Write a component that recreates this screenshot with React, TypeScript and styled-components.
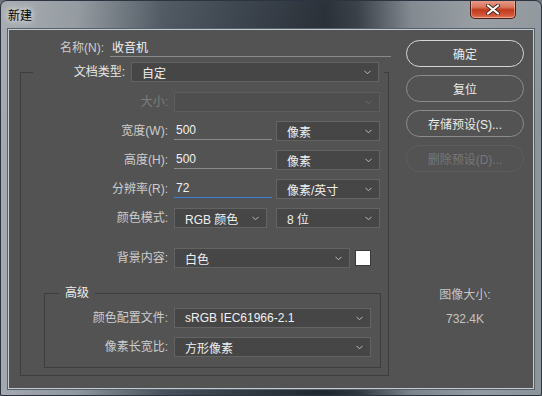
import React from 'react'
import styled, { createGlobalStyle, css } from 'styled-components'

const GlobalStyle = createGlobalStyle`
  html, body {
    margin: 0;
    padding: 0;
    background: #6d747b;
  }
  body {
    font-family: "Liberation Sans", "Noto Sans CJK SC", sans-serif;
    font-size: 12px;
  }
`

const Chevron = ({ disabled }: { disabled?: boolean }) => (
  <svg width="7" height="5" viewBox="0 0 7 5">
    <path d="M0.5 0.8 L3.5 3.8 L6.5 0.8" fill="none" stroke={disabled ? '#6b6b6b' : '#bdbdbd'} strokeWidth="1" />
  </svg>
)

interface SelectProps {
  width: number
  disabled?: boolean
  children?: React.ReactNode
}

const Select = ({ width, disabled, children }: SelectProps) => (
  <SelectBox $width={width} $disabled={disabled}>
    <span>{children}</span>
    <Chevron disabled={disabled} />
  </SelectBox>
)

const App = () => {
  return (
    <>
      <GlobalStyle />
      <Window>
        <TitleBar>
          <Title>新建</Title>
          <CloseButton>
            <svg width="14" height="11" viewBox="0 0 14 11">
              <path d="M2 1.5 L12 9.5 M12 1.5 L2 9.5" stroke="#4a2a22" strokeWidth="4" strokeLinecap="round" />
              <path d="M2 1.5 L12 9.5 M12 1.5 L2 9.5" stroke="#ffffff" strokeWidth="2.2" strokeLinecap="round" />
            </svg>
          </CloseButton>
        </TitleBar>

        <Client>
          <FormColumn>
            <NameRow>
              <Label $width={95}>名称(N):</Label>
              <NameField>收音机</NameField>
            </NameRow>

            <Group>
              <DocLegend>
                <Label $width={92} $bright>文档类型:</Label>
                <Select width={248}>自定</Select>
              </DocLegend>

              <Row $top={10}>
                <Label $width={147} $disabled>大小:</Label>
                <Select width={206} disabled />
              </Row>
              <Row $top={9}>
                <Label $width={147}>宽度(W):</Label>
                <Field>500</Field>
                <Select width={104}>像素</Select>
              </Row>
              <Row $top={9}>
                <Label $width={147}>高度(H):</Label>
                <Field>500</Field>
                <Select width={104}>像素</Select>
              </Row>
              <Row $top={9}>
                <Label $width={147}>分辨率(R):</Label>
                <Field $focused>72</Field>
                <Select width={104}>像素/英寸</Select>
              </Row>
              <Row $top={9}>
                <Label $width={147}>颜色模式:</Label>
                <Select width={93}>RGB 颜色</Select>
                <Spacer $w={9} />
                <Select width={104}>8 位</Select>
              </Row>
              <Row $top={20}>
                <Label $width={147}>背景内容:</Label>
                <Select width={176}>白色</Select>
                <Swatch />
              </Row>

              <InnerGroup>
                <AdvLegend>高级</AdvLegend>
                <Row $top={8}>
                  <Label $width={123}>颜色配置文件:</Label>
                  <Select width={197}>sRGB IEC61966-2.1</Select>
                </Row>
                <Row $top={9}>
                  <Label $width={123}>像素长宽比:</Label>
                  <Select width={197}>方形像素</Select>
                </Row>
              </InnerGroup>
            </Group>
          </FormColumn>

          <SideColumn>
            <Button $primary>确定</Button>
            <Button>复位</Button>
            <Button>存储预设(S)...</Button>
            <Button $disabled>删除预设(D)...</Button>
            <SizeInfo>
              <SizeLabel>图像大小:</SizeLabel>
              <SizeValue>732.4K</SizeValue>
            </SizeInfo>
          </SideColumn>
        </Client>
      </Window>
    </>
  )
}

const Window = styled.div`
  width: 542px;
  height: 396px;
  box-sizing: border-box;
  border: 1px solid #2b3440;
  border-radius: 7px 7px 2px 2px;
  background:
    linear-gradient(180deg, rgba(255, 255, 255, 0.06) 0%, rgba(0, 0, 0, 0) 40%),
    linear-gradient(
      90deg,
      #a3a9ae 0%,
      #8f969c 14%,
      #48515b 30%,
      #313943 45%,
      #1f262e 60%,
      #2f363e 66%,
      #7c838a 76%,
      #939a9f 88%,
      #8c9399 100%
    );
  display: flex;
  flex-direction: column;
  overflow: hidden;
`

const TitleBar = styled.div`
  height: 28px;
  flex-shrink: 0;
  display: flex;
  justify-content: space-between;
  align-items: flex-start;
  padding-left: 7px;
  padding-right: 25px;
`

const Title = styled.div`
  margin-top: 6px;
  font-family: "Noto Sans CJK SC", sans-serif;
  font-size: 12px;
  line-height: 16px;
  color: #000;
  text-shadow: 0 0 6px rgba(255, 255, 255, 0.9), 0 0 10px rgba(255, 255, 255, 0.6);
`

const CloseButton = styled.div`
  width: 44px;
  height: 18px;
  margin-top: -1px;
  border: 1px solid #4a2019;
  border-top: none;
  border-radius: 0 0 5px 5px;
  background: linear-gradient(180deg, #e7a190 0%, #d9745c 40%, #c0391d 55%, #d3563b 85%, #e0805f 100%);
  box-shadow: inset 0 0 0 1px rgba(255, 210, 190, 0.45);
  display: flex;
  align-items: center;
  justify-content: center;
`

const Client = styled.div`
  margin: 0 7px 0 7px;
  height: 360px;
  flex-shrink: 0;
  box-sizing: border-box;
  border: 1px solid #c3cbd2;
  outline: 1px solid #56616c;
  background: #535353;
  display: flex;
`

const FormColumn = styled.div`
  width: 382px;
  padding-top: 8px;
`

const Label = styled.div<{ $width: number; $disabled?: boolean; $bright?: boolean }>`
  width: ${p => p.$width}px;
  margin-right: 6px;
  flex-shrink: 0;
  text-align: right;
  white-space: nowrap;
  line-height: 20px;
  color: ${p => (p.$disabled ? '#7e7e7e' : p.$bright ? '#e6e6e6' : '#cdcdcd')};
`

const NameRow = styled.div`
  display: flex;
  height: 19px;
  align-items: center;
`

const NameField = styled.div`
  width: 281px;
  height: 19px;
  line-height: 20px;
  padding-left: 2px;
  box-sizing: border-box;
  border-bottom: 1px solid #8a8a8a;
  color: #f2f2f2;
  align-self: flex-start;
`

const Group = styled.fieldset`
  margin: 5px 0 0 11px;
  width: 369px;
  height: 314px;
  box-sizing: border-box;
  padding: 0;
  border: 1px solid #3d3d3d;
  min-width: 0;
`

const DocLegend = styled.legend`
  padding: 0 5px 0 0;
  margin-left: 12px;
  display: flex;
  align-items: center;
  height: 20px;
`

const Row = styled.div<{ $top: number }>`
  display: flex;
  align-items: center;
  height: 20px;
  margin-top: ${p => p.$top}px;
`

const SelectBox = styled.div<{ $width: number; $disabled?: boolean }>`
  width: ${p => p.$width}px;
  height: 20px;
  flex-shrink: 0;
  box-sizing: border-box;
  padding: 0 7px 0 10px;
  display: flex;
  align-items: center;
  justify-content: space-between;
  white-space: nowrap;
  color: #f0f0f0;
  background: #464646;
  border: 1px solid #636363;
  ${p =>
    p.$disabled &&
    css`
      background: #4e4e4e;
      border-color: #5d5d5d;
    `}
`

const Field = styled.div<{ $focused?: boolean }>`
  width: 98px;
  height: 19px;
  margin-right: 4px;
  align-self: flex-start;
  box-sizing: border-box;
  padding-left: 2px;
  line-height: 19px;
  color: #f0f0f0;
  border-bottom: 1px solid ${p => (p.$focused ? '#3b7fd4' : '#8a8a8a')};
`

const Spacer = styled.div<{ $w: number }>`
  width: ${p => p.$w}px;
  flex-shrink: 0;
`

const Swatch = styled.div`
  width: 14px;
  height: 14px;
  margin-left: 5px;
  background: #ffffff;
  border: 1px solid #3a3a3a;
`

const InnerGroup = styled.fieldset`
  margin: 18px 0 0 23px;
  width: 337px;
  height: 82px;
  box-sizing: border-box;
  padding: 0;
  border: 1px solid #3d3d3d;
  min-width: 0;
`

const AdvLegend = styled.legend`
  margin-left: 14px;
  padding: 0 6px;
  line-height: 14px;
  color: #ededed;
`

const SideColumn = styled.div`
  padding-top: 10px;
  margin-left: 15px;
  width: 118px;
  display: flex;
  flex-direction: column;
  gap: 8px;
`

const Button = styled.div<{ $primary?: boolean; $disabled?: boolean }>`
  height: 27px;
  box-sizing: border-box;
  border-radius: 14px;
  border: 1px solid ${p => (p.$primary ? '#d6d6d6' : p.$disabled ? '#5e5e5e' : '#8c8c8c')};
  display: flex;
  align-items: center;
  justify-content: center;
  color: ${p => (p.$disabled ? '#777777' : '#ececec')};
  white-space: nowrap;
`

const SizeInfo = styled.div`
  margin-top: 108px;
  display: flex;
  flex-direction: column;
  align-items: center;
  gap: 10px;
  color: #c4c4c4;
`

const SizeLabel = styled.div`
  line-height: 14px;
`

const SizeValue = styled.div`
  line-height: 14px;
`

export default App
